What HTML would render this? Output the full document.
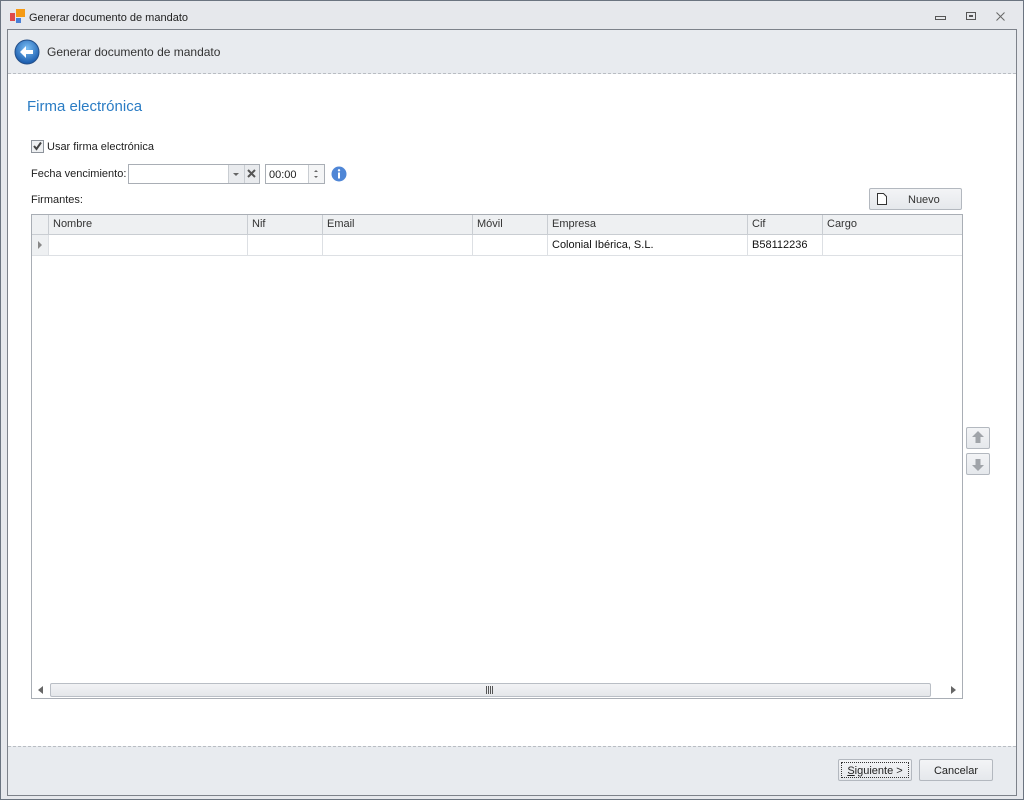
<!DOCTYPE html>
<html><head><meta charset="utf-8">
<style>
*{box-sizing:border-box;margin:0;padding:0}
body{width:1024px;height:800px;background:#dfe2e6;font-family:"Liberation Sans",sans-serif;font-size:11px;color:#1e1e1e;position:relative;overflow:hidden}
.a{position:absolute}
.win{left:0;top:0;width:1024px;height:800px;border:1px solid #6b7480;background:#e6e8ec}
.inner{left:7px;top:29px;width:1010px;height:767px;border:1px solid #7d828a;background:#fff}
.hdr{left:8px;top:30px;width:1008px;height:44px;background:#e8ebef;border-bottom:1px dashed #b9bdc3}
.ftr{left:8px;top:746px;width:1008px;height:49px;background:#e8ebef;border-top:1px dashed #b9bdc3}
.btn{border:1px solid #b3b8bf;border-radius:2px;background:linear-gradient(#f3f4f6,#e5e8ec);text-align:center}
.grid{left:31px;top:214px;width:932px;height:485px;border:1px solid #a9aeb5;background:#fff}
.th{top:0;height:20px;border-right:1px solid #c9cdd2;border-bottom:1px solid #c9cdd2;background:#eef0f2;padding:3px 0 0 4px;color:#333}
.td{top:20px;height:21px;border-right:1px solid #dde0e4;border-bottom:1px solid #dde0e4;padding:4px 0 0 4px;color:#111}
</style></head><body>
<div class="a win"></div>
<div class="a" style="left:10px;top:13px;width:5px;height:8px;background:#e04a4a"></div>
<div class="a" style="left:16px;top:9px;width:9px;height:8px;background:#f59a14"></div>
<div class="a" style="left:16px;top:18px;width:5px;height:5px;background:#4a7fd4"></div>
<div class="a" style="left:29px;top:12px;color:#222">Generar documento de mandato</div>
<svg class="a" style="left:930px;top:8px" width="80" height="16">
<rect x="5.5" y="8.5" width="10" height="3" fill="none" stroke="#555"/>
<rect x="36.5" y="4.5" width="9" height="7" fill="none" stroke="#555"/><rect x="39" y="7" width="4" height="2" fill="#555"/>
<path d="M66.5 4.5l8 8M74.5 4.5l-8 8" stroke="#666" stroke-width="1" fill="none"/>
</svg>
<div class="a inner"></div>
<div class="a hdr"></div>
<svg class="a" style="left:14px;top:39px" width="26" height="26"><defs><radialGradient id="g" cx=".5" cy=".35" r=".6"><stop offset="0" stop-color="#7cc0f5"/><stop offset="1" stop-color="#1d5fb0"/></radialGradient></defs>
<circle cx="13" cy="13" r="12" fill="url(#g)" stroke="#244f88"/><path d="M6 13l6-6v4h7v4h-7v4z" fill="#fff"/></svg>
<div class="a" style="left:47px;top:45px;font-size:12px;color:#333">Generar documento de mandato</div>
<div class="a" style="left:27px;top:98px;font-size:15px;color:#2a7cc4">Firma electrónica</div>
<div class="a" style="left:31px;top:140px;width:13px;height:13px;border:1px solid #8d939b;background:#eef0f2"></div>
<svg class="a" style="left:32px;top:141px" width="11" height="11"><path d="M2 5l2.5 3L9 1.5" stroke="#444" stroke-width="2" fill="none"/></svg>
<div class="a" style="left:47px;top:141px">Usar firma electrónica</div>
<div class="a" style="left:31px;top:168px">Fecha vencimiento:</div>
<div class="a" style="left:128px;top:164px;width:132px;height:20px;border:1px solid #a9aeb5;background:#fff"></div>
<div class="a" style="left:228px;top:165px;width:16px;height:18px;background:#e9ebee;border-left:1px solid #c9cdd2"></div>
<div class="a" style="left:244px;top:165px;width:15px;height:18px;background:#e9ebee;border-left:1px solid #c9cdd2"></div>
<svg class="a" style="left:228px;top:165px" width="32" height="18"><path d="M5 8h6l-3 3z" fill="#666"/><path d="M20 5l7 7M27 5l-7 7" stroke="#555" stroke-width="2"/></svg>
<div class="a" style="left:265px;top:164px;width:60px;height:20px;border:1px solid #a9aeb5;background:#fff;padding:4px 0 0 3px">00:00</div>
<div class="a" style="left:308px;top:165px;width:16px;height:18px;border-left:1px solid #c9cdd2;background:#f4f5f6"></div>
<svg class="a" style="left:308px;top:165px" width="16" height="18"><path d="M6 7l2-2 2 2zM6 11l2 2 2-2z" fill="#666"/></svg>
<svg class="a" style="left:331px;top:166px" width="16" height="16"><circle cx="8" cy="8" r="7.5" fill="#4f86d6"/><rect x="7" y="6.5" width="2" height="6" fill="#fff"/><circle cx="8" cy="4.3" r="1.2" fill="#fff"/></svg>
<div class="a" style="left:31px;top:194px">Firmantes:</div>
<div class="a btn" style="left:869px;top:188px;width:93px;height:22px"></div>
<svg class="a" style="left:876px;top:192px" width="12" height="14"><path d="M1.5 1.5h6l3 3v8h-9z" fill="#fff" stroke="#333"/></svg>
<div class="a" style="left:908px;top:194px;color:#333">Nuevo</div>
<div class="a grid">
<div class="a th" style="left:0;width:17px;padding:0"></div>
<div class="a th" style="left:17px;width:199px">Nombre</div>
<div class="a th" style="left:216px;width:75px">Nif</div>
<div class="a th" style="left:291px;width:150px">Email</div>
<div class="a th" style="left:441px;width:75px">Móvil</div>
<div class="a th" style="left:516px;width:200px">Empresa</div>
<div class="a th" style="left:716px;width:75px">Cif</div>
<div class="a th" style="left:791px;width:139px;border-right:none">Cargo</div>
<div class="a td" style="left:0;width:17px;background:#eef0f2;padding:0"><svg width="16" height="20"><path d="M6 6l4 4-4 4z" fill="#888"/></svg></div>
<div class="a td" style="left:17px;width:199px"></div>
<div class="a td" style="left:216px;width:75px"></div>
<div class="a td" style="left:291px;width:150px"></div>
<div class="a td" style="left:441px;width:75px"></div>
<div class="a td" style="left:516px;width:200px">Colonial Ibérica, S.L.</div>
<div class="a td" style="left:716px;width:75px">B58112236</div>
<div class="a td" style="left:791px;width:139px;border-right:none"></div>
<div class="a" style="left:0;top:467px;width:930px;height:16px;background:#fff"></div>
<svg class="a" style="left:4px;top:470px" width="10" height="10"><path d="M7 1v8L2 5z" fill="#666"/></svg>
<div class="a" style="left:18px;top:468px;width:881px;height:14px;border:1px solid #b9bec5;border-radius:2px;background:linear-gradient(#f2f3f5,#e4e7ea)"></div>
<svg class="a" style="left:454px;top:471px" width="8" height="8"><path d="M0.5 0v8M2.5 0v8M4.5 0v8M6.5 0v8" stroke="#555"/></svg>
<svg class="a" style="left:916px;top:470px" width="10" height="10"><path d="M3 1v8l5-4z" fill="#666"/></svg>
</div>
<div class="a btn" style="left:966px;top:427px;width:24px;height:22px"></div>
<svg class="a" style="left:966px;top:427px" width="24" height="22"><path d="M12 4l6 6h-3.5v6h-5v-6H6z" fill="#a0a4a9"/></svg>
<div class="a btn" style="left:966px;top:453px;width:24px;height:22px"></div>
<svg class="a" style="left:966px;top:453px" width="24" height="22"><path d="M12 18l6-6h-3.5V6h-5v6H6z" fill="#a0a4a9"/></svg>
<div class="a ftr"></div>
<div class="a btn" style="left:838px;top:759px;width:74px;height:22px;padding-top:2px"><div style="border:1px dotted #333;height:16px;margin:0 2px;padding-top:2px;color:#222"><u>S</u>iguiente &gt;</div></div>
<div class="a btn" style="left:919px;top:759px;width:74px;height:22px;padding-top:5px;color:#222">Cancelar</div>
</body></html>
